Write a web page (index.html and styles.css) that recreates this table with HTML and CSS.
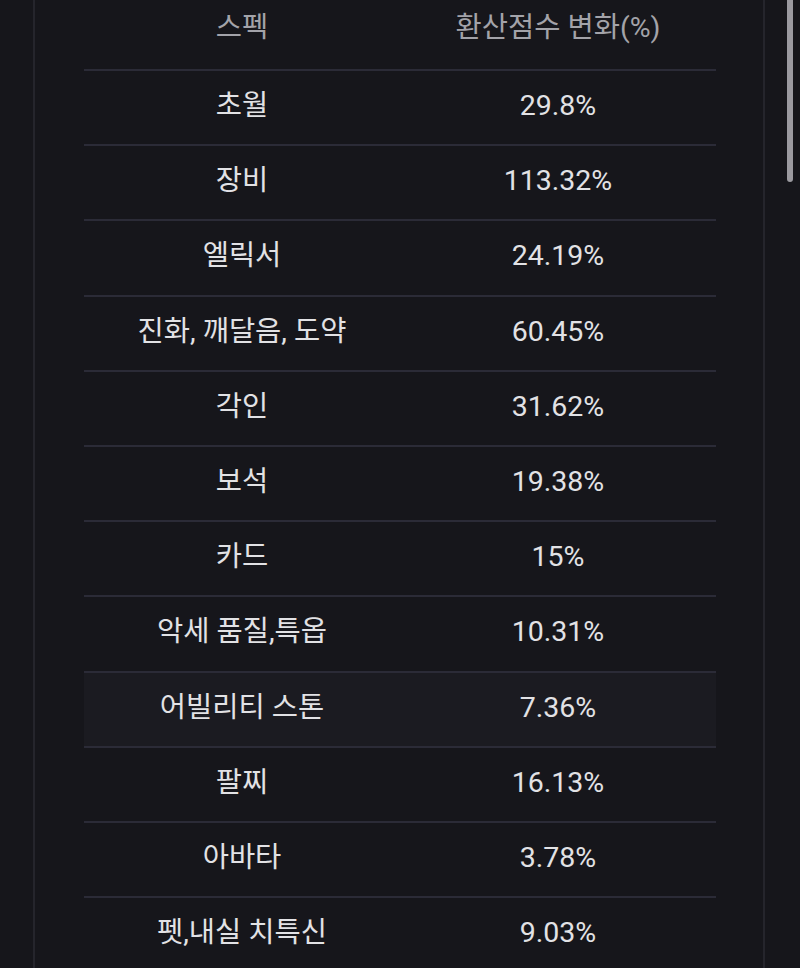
FILE: index.html
```html
<!DOCTYPE html>
<html lang="ko">
<head>
    <meta charset="utf-8">
    <link rel="stylesheet" href="styles.css">
</head>
<body>
    <div class="panel">
        <table class="spec">
            <thead>
                <tr><th>스펙</th><th>환산점수 변화(%)</th></tr>
            </thead>
            <tbody>
                <tr><td>초월</td><td>29.8%</td></tr>
                <tr><td>장비</td><td>113.32%</td></tr>
                <tr><td>엘릭서</td><td>24.19%</td></tr>
                <tr><td>진화, 깨달음, 도약</td><td>60.45%</td></tr>
                <tr><td>각인</td><td>31.62%</td></tr>
                <tr><td>보석</td><td>19.38%</td></tr>
                <tr><td>카드</td><td>15%</td></tr>
                <tr><td>악세 품질,특옵</td><td>10.31%</td></tr>
                <tr class="hover"><td>어빌리티 스톤</td><td>7.36%</td></tr>
                <tr><td>팔찌</td><td>16.13%</td></tr>
                <tr><td>아바타</td><td>3.78%</td></tr>
                <tr><td>펫,내실 치특신</td><td>9.03%</td></tr>
            </tbody>
        </table>
    </div>
    <div class="scroll-thumb"></div>
</body>
</html>
```
FILE: styles.css
```css
html, body{
    margin: 0;
    padding: 0;
    background-color: #16161b;
    height: 968px;
    overflow: hidden;
}
body{
    font-family: Roboto, "Noto Sans CJK KR", sans-serif;
    color: #e2e2e5;
}
.panel{
    width: 630px;
    margin-left: 33px;
    padding: 0 49px;
    min-height: 968px;
    border-left: 2px solid #25252c;
    border-right: 2px solid #25252c;
}
table.spec{
    width: 632px;
    border-collapse: collapse;
    table-layout: fixed;
}
.spec th, .spec td{
    width: 50%;
    text-align: center;
    font-size: 28.5px;
    line-height: 34px;
    font-weight: 400;
    padding: 0;
}
.spec th{
    color: #a3a3a9;
    height: 55px;
    padding-bottom: 14px;
    border-bottom: 2px solid #2b2b37;
}
.spec td{
    height: 70.2px;
    padding-bottom: 3px;
    border-bottom: 2px solid #2b2b37;
}
.spec tr.hover td{
    background-color: #1b1b21;
}
.scroll-thumb{
    position: absolute;
    left: 787px;
    top: -10px;
    width: 6px;
    height: 192px;
    border-radius: 3px;
    background-color: #9b9aa0;
}
```
